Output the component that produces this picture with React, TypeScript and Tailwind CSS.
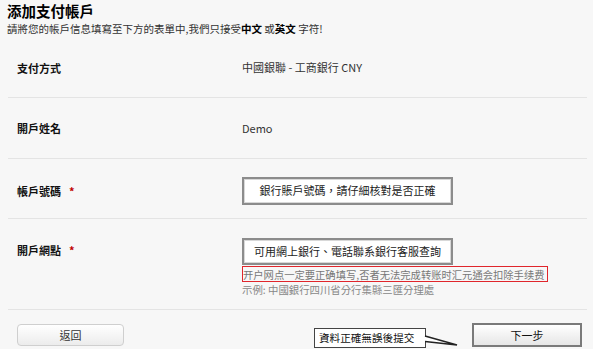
const font = { fontFamily: '"Noto Sans CJK TC", "Noto Sans", sans-serif' }

function Label({ text, required }: { text: string; required?: boolean }) {
    return (
        <div className="w-[234px] shrink-0 pl-[9px] text-[11px] font-bold text-[#111] leading-[16px]">
            {text}
            {required && <span className="ml-[8px] text-[#c00000]">*</span>}
        </div>
    )
}

export default function App() {
    return (
        <div className="w-[593px] h-[349px] overflow-hidden bg-[#f7f7f7] text-[#222]" style={font}>
            {/* Heading */}
            <div className="pl-[7px] h-[38px]">
                <h1 className="text-[14.5px] font-bold leading-[21px] text-black">添加支付帳戶</h1>
                <p className="text-[10.5px] leading-[15px] text-[#333]">
                    請將您的帳戶信息填寫至下方的表單中,我們只接受<b className="text-black">中文</b> 或<b className="text-black">英文</b> 字符!
                </p>
            </div>

            <div className="ml-[8px] mr-[6px]">
                {/* Payment method */}
                <div className="flex items-center h-[60px] border-b border-[#e4e4e4]">
                    <Label text="支付方式" />
                    <div className="text-[11px] text-[#333]">中國銀聯 - 工商銀行 CNY</div>
                </div>

                {/* Account name */}
                <div className="flex items-center h-[61px] border-b border-[#e4e4e4]">
                    <Label text="開戶姓名" />
                    <div className="text-[11px] text-[#333]">Demo</div>
                </div>

                {/* Account number */}
                <div className="flex items-center h-[60px] border-b border-[#e4e4e4] pt-[4px]">
                    <Label text="帳戶號碼" required />
                    <div className="w-[211px] h-[28px] flex items-center justify-center border-2 border-[#8c8c8c] bg-white shadow-[inset_0_0_0_1px_#d8d8d8] text-[11px] text-[#222]">
                        銀行賬戶號碼，請仔細核對是否正確
                    </div>
                </div>

                {/* Branch */}
                <div className="flex items-start border-b border-[#e4e4e4] pt-[19px] pb-[12px]">
                    <div className="pt-[4px]">
                        <Label text="開戶網點" required />
                    </div>
                    <div className="flex flex-col">
                        <div className="w-[211px] h-[27px] flex items-center justify-center border-2 border-[#8c8c8c] bg-white shadow-[inset_0_0_0_1px_#d8d8d8] text-[11px] text-[#222]">
                            可用網上銀行、電話聯系銀行客服查詢
                        </div>
                        <div className="mt-[1px] w-[306px] h-[16px] flex items-center border-[1.5px] border-[#e0262c] text-[10.3px] text-[#777] leading-[13px] whitespace-nowrap overflow-hidden">
                            开户网点一定要正确填写,否者无法完成转账时汇元通会扣除手续费
                        </div>
                        <div className="text-[10.4px] text-[#888] leading-[14px] mt-[1px]">
                            示例: 中國銀行四川省分行集縣三匯分理處
                        </div>
                    </div>
                </div>

                {/* Actions */}
                <div className="flex items-center pt-[12px]">
                    <button className="ml-[9px] w-[107px] h-[22px] rounded-[4px] border border-[#cfcfcf] bg-gradient-to-b from-white to-[#ececec] text-[11px] text-[#333]">
                        返回
                    </button>
                    <div className="ml-[190px] mt-[6px] relative w-[112px] h-[20px] border-[1.5px] border-[#444] bg-white flex items-center pl-[4px] text-[10.6px] text-[#111]">
                        資料正確無誤後提交
                        <svg className="absolute left-[108px] top-[-1.5px] overflow-visible" width="36" height="20" viewBox="0 0 36 20">
                            <path d="M0 8 L34 17 L0 13.5 Z" fill="#fff" />
                            <path d="M2 8 L34 17 L2 13.5" fill="none" stroke="#222" strokeWidth="1.5" />
                        </svg>
                    </div>
                    <button className="ml-[46px] w-[110px] h-[24px] border-2 border-[#7a7a7a] bg-gradient-to-b from-white to-[#e6e6e6] text-[11px] text-[#111]">
                        下一步
                    </button>
                </div>
            </div>
        </div>
    )
}
